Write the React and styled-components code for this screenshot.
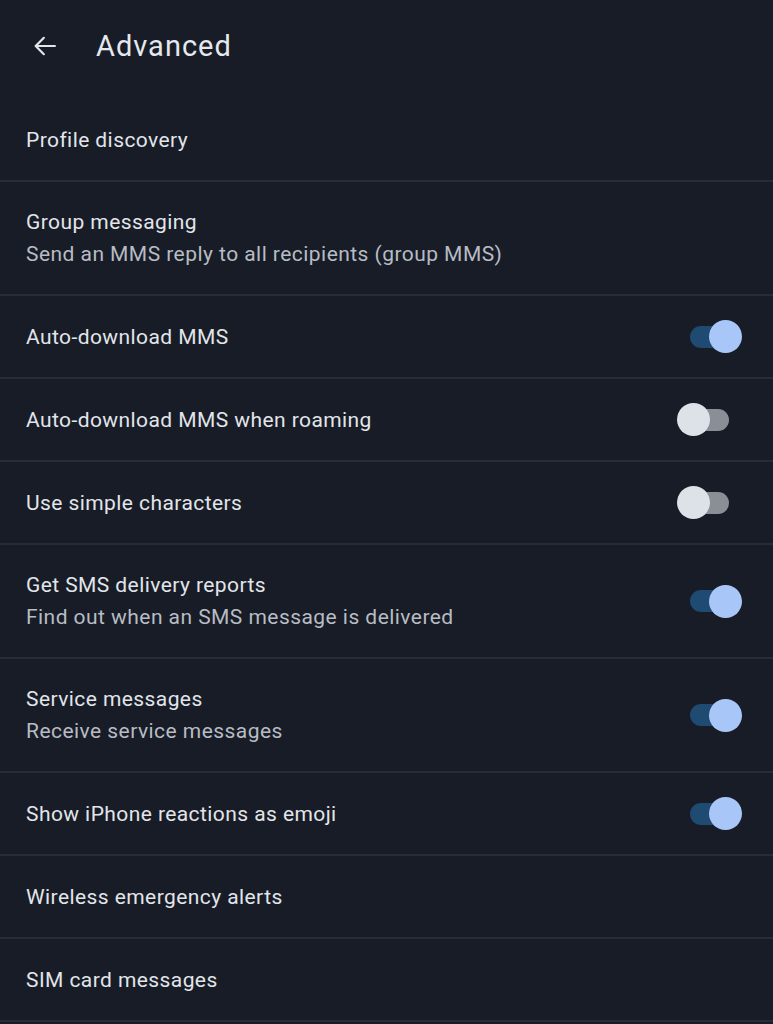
import styled, { createGlobalStyle } from "styled-components";

const GlobalStyle = createGlobalStyle`
  html, body {
    margin: 0;
    padding: 0;
    background: #171c26;
  }
  body {
    font-family: Roboto, "Noto Sans", sans-serif;
    -webkit-font-smoothing: antialiased;
  }
`;

const Screen = styled.div`
  width: 773px;
  min-height: 1024px;
  background: #171c26;
  color: #e2e5ea;
`;

const Header = styled.div`
  height: 92px;
  padding: 0 0 7px 31px;
  display: flex;
  align-items: center;
`;

const BackButton = styled.button`
  width: 28px;
  height: 28px;
  padding: 0;
  border: none;
  background: none;
  display: flex;
  align-items: center;
  justify-content: center;
  color: #e2e5ea;
`;

const Title = styled.h1`
  margin: 0 0 0 37px;
  font-size: 29px;
  font-weight: 400;
  letter-spacing: 1px;
  color: #e6e8ed;
`;

const List = styled.div`
  display: flex;
  flex-direction: column;
`;

const Row = styled.div`
  height: ${(p) => (p.$sub ? 112 : 81)}px;
  display: flex;
  align-items: center;
  justify-content: space-between;
  padding: 0 31px 0 26px;
  border-bottom: 2px solid #272d36;
`;

const TextBlock = styled.div`
  display: flex;
  flex-direction: column;
  gap: 8px;
`;

const RowTitle = styled.div`
  font-size: 21px;
  line-height: 24px;
  color: #e2e5ea;
  letter-spacing: 0.42px;
`;

const RowSub = styled.div`
  font-size: 21px;
  line-height: 24px;
  color: #b8bcc4;
  letter-spacing: 0.45px;
`;

const Switch = styled.div`
  position: relative;
  width: 39px;
  height: 22px;
  margin-right: 13px;
  border-radius: 11px;
  background: ${(p) => (p.$on ? "#1f4a72" : "#8a8e95")};
`;

const Thumb = styled.div`
  position: absolute;
  top: -5.5px;
  left: ${(p) => (p.$on ? "19px" : "-13px")};
  width: 33px;
  height: 33px;
  border-radius: 50%;
  background: ${(p) => (p.$on ? "#a8c7f8" : "#dde1e8")};
`;

const items = [
  { title: "Profile discovery" },
  {
    title: "Group messaging",
    sub: "Send an MMS reply to all recipients (group MMS)",
  },
  { title: "Auto-download MMS", toggle: true },
  { title: "Auto-download MMS when roaming", toggle: false },
  { title: "Use simple characters", toggle: false },
  {
    title: "Get SMS delivery reports",
    sub: "Find out when an SMS message is delivered",
    toggle: true,
  },
  { title: "Service messages", sub: "Receive service messages", toggle: true },
  { title: "Show iPhone reactions as emoji", toggle: true },
  { title: "Wireless emergency alerts" },
  { title: "SIM card messages" },
];

function App() {
  return (
    <>
      <GlobalStyle />
      <Screen>
        <Header>
          <BackButton>
            <svg width="28" height="28" viewBox="0 0 24 24" fill="none">
              <path
                d="M20.5 12H4M11 5l-7 7 7 7"
                stroke="currentColor"
                strokeWidth="1.9"
                strokeLinecap="round"
                strokeLinejoin="round"
              />
            </svg>
          </BackButton>
          <Title>Advanced</Title>
        </Header>
        <List>
          {items.map((item, index) => (
            <Row key={index} $sub={!!item.sub}>
              <TextBlock>
                <RowTitle>{item.title}</RowTitle>
                {item.sub && <RowSub>{item.sub}</RowSub>}
              </TextBlock>
              {item.toggle !== undefined && (
                <Switch $on={item.toggle}>
                  <Thumb $on={item.toggle} />
                </Switch>
              )}
            </Row>
          ))}
        </List>
      </Screen>
    </>
  );
}

export default App;
